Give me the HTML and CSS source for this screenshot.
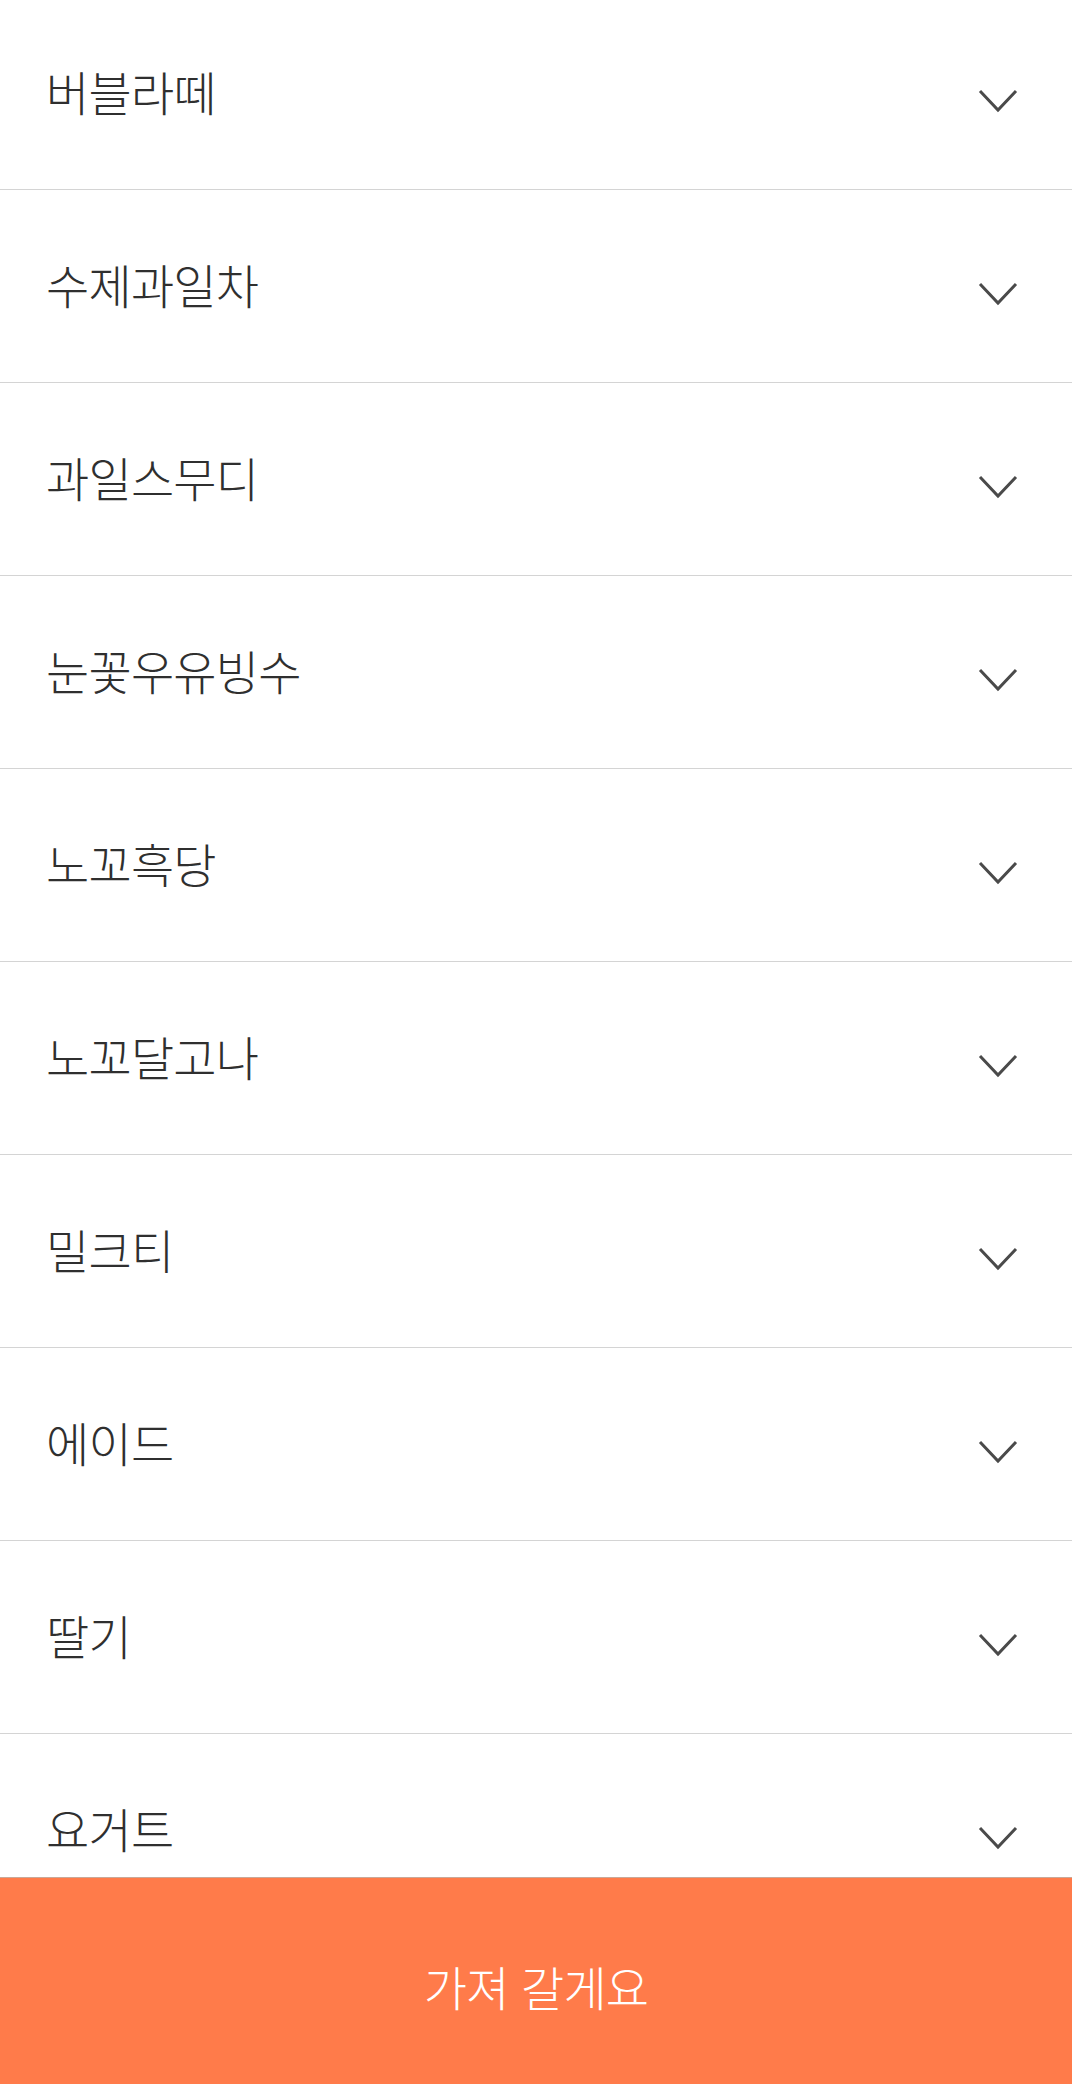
FILE: index.html
```html
<!DOCTYPE html>
<html lang="ko">
<head>
  <meta charset="UTF-8">
  <meta name="viewport" content="width=device-width, initial-scale=1.0">
  <title>메뉴 선택</title>
  <link rel="stylesheet" href="styles.css">
</head>
<body>
  <ul class="menu-list">
    <li class="menu-item"><span class="menu-name">버블라떼</span><svg class="chevron" viewBox="0 0 40 24"><polyline points="2,2 20,21 38,2"/></svg></li>
    <li class="menu-item"><span class="menu-name">수제과일차</span><svg class="chevron" viewBox="0 0 40 24"><polyline points="2,2 20,21 38,2"/></svg></li>
    <li class="menu-item"><span class="menu-name">과일스무디</span><svg class="chevron" viewBox="0 0 40 24"><polyline points="2,2 20,21 38,2"/></svg></li>
    <li class="menu-item"><span class="menu-name">눈꽃우유빙수</span><svg class="chevron" viewBox="0 0 40 24"><polyline points="2,2 20,21 38,2"/></svg></li>
    <li class="menu-item"><span class="menu-name">노꼬흑당</span><svg class="chevron" viewBox="0 0 40 24"><polyline points="2,2 20,21 38,2"/></svg></li>
    <li class="menu-item"><span class="menu-name">노꼬달고나</span><svg class="chevron" viewBox="0 0 40 24"><polyline points="2,2 20,21 38,2"/></svg></li>
    <li class="menu-item"><span class="menu-name">밀크티</span><svg class="chevron" viewBox="0 0 40 24"><polyline points="2,2 20,21 38,2"/></svg></li>
    <li class="menu-item"><span class="menu-name">에이드</span><svg class="chevron" viewBox="0 0 40 24"><polyline points="2,2 20,21 38,2"/></svg></li>
    <li class="menu-item"><span class="menu-name">딸기</span><svg class="chevron" viewBox="0 0 40 24"><polyline points="2,2 20,21 38,2"/></svg></li>
    <li class="menu-item"><span class="menu-name">요거트</span><svg class="chevron" viewBox="0 0 40 24"><polyline points="2,2 20,21 38,2"/></svg></li>
  </ul>
  <button class="take-btn">가져 갈게요</button>
</body>
</html>
```

FILE: styles.css
```css
body {
  margin: 0;
  background: #fff;
  font-family: "Noto Sans CJK KR", "Noto Sans", sans-serif;
  color: #2f2f2f;
}
.menu-list {
  list-style: none;
  margin: -3px 0 0;
  padding: 0 0 210px;
}
.menu-item {
  display: flex;
  align-items: center;
  justify-content: space-between;
  height: 192px;
  padding: 0 54px 0 46px;
  border-bottom: 1px solid #d4d4d4;
}
.menu-name {
  font-size: 47px;
  font-weight: 300;
  letter-spacing: -0.8px;
  line-height: 1;
  margin-bottom: 5px;
}
.chevron {
  width: 40px;
  height: 24px;
  margin-top: 16px;
  fill: none;
  stroke: #4a4a4a;
  stroke-width: 3;
}
.take-btn {
  position: fixed;
  left: 0;
  right: 0;
  bottom: 0;
  height: 207px;
  border: none;
  border-top: 1px solid #c9a898;
  background: #ff7b4a;
  color: #fff;
  font-family: inherit;
  font-size: 47px;
  font-weight: 300;
  letter-spacing: -0.8px;
  padding-top: 10px;
}
```
